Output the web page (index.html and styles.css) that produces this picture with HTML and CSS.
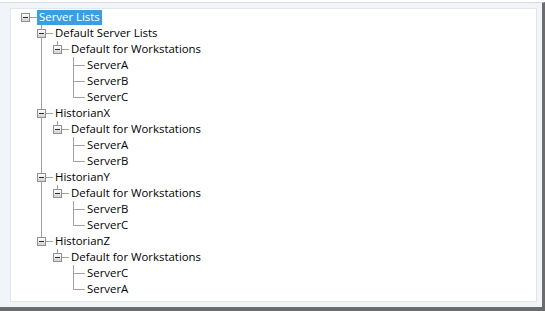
FILE: index.html
```html
<!DOCTYPE html>
<html lang="en">
<head>
    <meta charset="UTF-8">
    <title>Server Lists</title>
    <link rel="stylesheet" href="styles.css">
</head>
<body>

    <!-- Window frame around the tree view -->
    <div class="window">
        <div class="panel">
            <ul class="tree">
                <li class="last">
                    <div class="row"><span class="gutter"><span class="exp"></span></span><span class="label selected">Server Lists</span></div>
                    <ul>
                        <li>
                            <div class="row"><span class="gutter"><span class="exp"></span></span><span class="label">Default Server Lists</span></div>
                            <ul>
                                <li class="last">
                                    <div class="row"><span class="gutter"><span class="exp"></span></span><span class="label">Default for Workstations</span></div>
                                    <ul>
                                        <li><div class="row"><span class="gutter"></span><span class="label">ServerA</span></div></li>
                                        <li><div class="row"><span class="gutter"></span><span class="label">ServerB</span></div></li>
                                        <li class="last"><div class="row"><span class="gutter"></span><span class="label">ServerC</span></div></li>
                                    </ul>
                                </li>
                            </ul>
                        </li>
                        <li>
                            <div class="row"><span class="gutter"><span class="exp"></span></span><span class="label">HistorianX</span></div>
                            <ul>
                                <li class="last">
                                    <div class="row"><span class="gutter"><span class="exp"></span></span><span class="label">Default for Workstations</span></div>
                                    <ul>
                                        <li><div class="row"><span class="gutter"></span><span class="label">ServerA</span></div></li>
                                        <li class="last"><div class="row"><span class="gutter"></span><span class="label">ServerB</span></div></li>
                                    </ul>
                                </li>
                            </ul>
                        </li>
                        <li>
                            <div class="row"><span class="gutter"><span class="exp"></span></span><span class="label">HistorianY</span></div>
                            <ul>
                                <li class="last">
                                    <div class="row"><span class="gutter"><span class="exp"></span></span><span class="label">Default for Workstations</span></div>
                                    <ul>
                                        <li><div class="row"><span class="gutter"></span><span class="label">ServerB</span></div></li>
                                        <li class="last"><div class="row"><span class="gutter"></span><span class="label">ServerC</span></div></li>
                                    </ul>
                                </li>
                            </ul>
                        </li>
                        <li class="last">
                            <div class="row"><span class="gutter"><span class="exp"></span></span><span class="label">HistorianZ</span></div>
                            <ul>
                                <li class="last">
                                    <div class="row"><span class="gutter"><span class="exp"></span></span><span class="label">Default for Workstations</span></div>
                                    <ul>
                                        <li><div class="row"><span class="gutter"></span><span class="label">ServerC</span></div></li>
                                        <li class="last"><div class="row"><span class="gutter"></span><span class="label">ServerA</span></div></li>
                                    </ul>
                                </li>
                            </ul>
                        </li>
                    </ul>
                </li>
            </ul>
        </div>
    </div>

</body>
</html>
```

FILE: styles.css
```css
/* Page */
body {
    margin: 0;
    background: #ffffff;
    font-family: "Open Sans", "Noto Sans", sans-serif;
    font-size: 11.4px;
    color: #000000;
}

/* Outer window with dark edge on right and bottom */
.window {
    box-sizing: border-box;
    width: 545px;
    height: 309px;
    margin-top: 2px;
    padding: 5px 5px 5px 10px;
    background: #f1f4f9;
    border-top: 1px solid #d6d8dc;
    border-right: 3px solid #6c6c6c;
    border-bottom: 4px solid #6c6c6c;
}

/* White tree panel */
.panel {
    box-sizing: border-box;
    height: 294px;
    background: #ffffff;
    border: 1px solid #e2e5ea;
    padding-left: 6px;
}

/* Tree list */
.tree,
.tree ul {
    list-style: none;
    margin: 0;
    padding: 0;
}
.tree ul {
    padding-left: 16px;
}
.tree li {
    position: relative;
}

/* Connector lines */
.tree ul li::before {
    content: "";
    position: absolute;
    left: 8px;
    top: 0;
    bottom: 0;
    border-left: 1px solid #a0a0a0;
}
.tree ul li.last::before {
    bottom: auto;
    height: 8px;
}
.tree li::after {
    content: "";
    position: absolute;
    left: 8px;
    top: 8px;
    width: 12px;
    border-top: 1px solid #a0a0a0;
}

/* One tree row */
.row {
    display: flex;
    align-items: center;
    height: 16px;
}
.gutter {
    position: relative;
    z-index: 1;
    flex: none;
    width: 20px;
    height: 16px;
}

/* Expander box with minus */
.exp {
    position: absolute;
    left: 4px;
    top: 4px;
    box-sizing: border-box;
    width: 9px;
    height: 9px;
    border: 1px solid #919191;
    background: linear-gradient(#ffffff, #d2d2d2);
}
.exp::after {
    content: "";
    position: absolute;
    left: 1px;
    top: 3px;
    width: 5px;
    height: 1px;
    background: #2b2b2b;
}

/* Node text */
.label {
    padding: 0 2px;
    height: 15px;
    line-height: 13px;
    white-space: nowrap;
}
.label.selected {
    background: #3a9fe2;
    color: #ffffff;
}
```
